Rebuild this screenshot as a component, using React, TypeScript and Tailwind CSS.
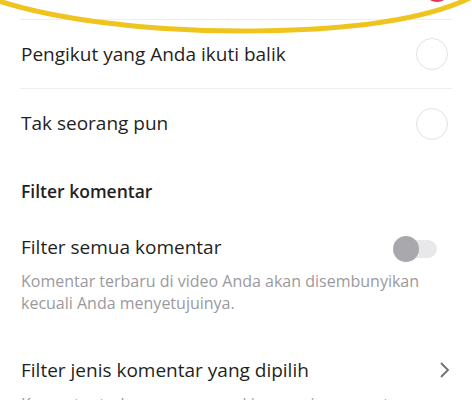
import React from "react";

const Radio = () => (
  <div className="w-[32px] h-[32px] rounded-full border-[1.5px] border-[#e3e3e3] shrink-0" />
);

export default function App() {
  return (
    <div
      className="relative w-[472px] h-[400px] overflow-hidden bg-white text-[#1f1f24]"
      style={{ fontFamily: "'Open Sans', 'Noto Sans', sans-serif" }}
    >
      <div className="mt-[-49px] flex flex-col">
        <div className="mx-[20px] h-[69px] flex items-center justify-end border-b border-[#efefef]">
          <div className="mr-[1px] mt-[6px]">
            <div className="w-[28px] h-[28px] rounded-full bg-[#e0365a] shrink-0" />
          </div>
        </div>
        <div className="mx-[20px] h-[69px] flex items-center justify-between border-b border-[#efefef]">
          <span className="text-[19px] pl-[1px]">Pengikut yang Anda ikuti balik</span>
          <div className="mr-[4px]">
            <Radio />
          </div>
        </div>
        <div className="mx-[20px] h-[69px] flex items-center justify-between">
          <span className="text-[19px] pl-[1px]">Tak seorang pun</span>
          <div className="mr-[4px]">
            <Radio />
          </div>
        </div>
        <div className="mx-[20px] mt-[18px] h-[30px] flex items-center">
          <span className="text-[17.5px] font-semibold pl-[1px]">Filter komentar</span>
        </div>
        <div className="mx-[20px] mt-[26px] flex flex-col">
          <div className="h-[30px] flex items-center justify-between">
            <span className="text-[19px] pl-[1px]">Filter semua komentar</span>
            <div className="relative w-[44px] h-[26px] mr-[15px] mt-[3px] flex items-center">
              <div className="absolute right-0 w-[38px] h-[18px] rounded-full bg-[#e8e8ea]" />
              <div className="absolute left-0 w-[26px] h-[26px] rounded-full bg-[#a9a9ad]" />
            </div>
          </div>
          <p className="mt-[8px] text-[16px] leading-[22px] text-[#9a9a9e] pl-[1px]">
            Komentar terbaru di video Anda akan disembunyikan
            <br />
            kecuali Anda menyetujuinya.
          </p>
        </div>
        <div className="mx-[20px] mt-[41px] flex flex-col">
          <div className="h-[30px] flex items-center justify-between">
            <span className="text-[19px] pl-[1px]">Filter jenis komentar yang dipilih</span>
            <svg width="14" height="20" viewBox="0 0 14 20">
              <path d="M3 3 L10 10 L3 17" fill="none" stroke="#6e6e72" strokeWidth="1.8" />
            </svg>
          </div>
          <p className="mt-[8px] text-[16px] leading-[22px] text-[#9a9a9e] pl-[1px]">
            Komentar terbaru yang mungkin menyinggung atau
          </p>
        </div>
      </div>
      <svg className="absolute left-0 top-0 pointer-events-none" width="472" height="40" viewBox="0 0 472 40">
        <path
          d="M-4 0 C 50 18, 140 31, 240 31 C 340 31, 420 22, 470 -2"
          fill="none"
          stroke="#efc41f"
          strokeWidth="5"
          strokeLinecap="round"
        />
      </svg>
    </div>
  );
}
